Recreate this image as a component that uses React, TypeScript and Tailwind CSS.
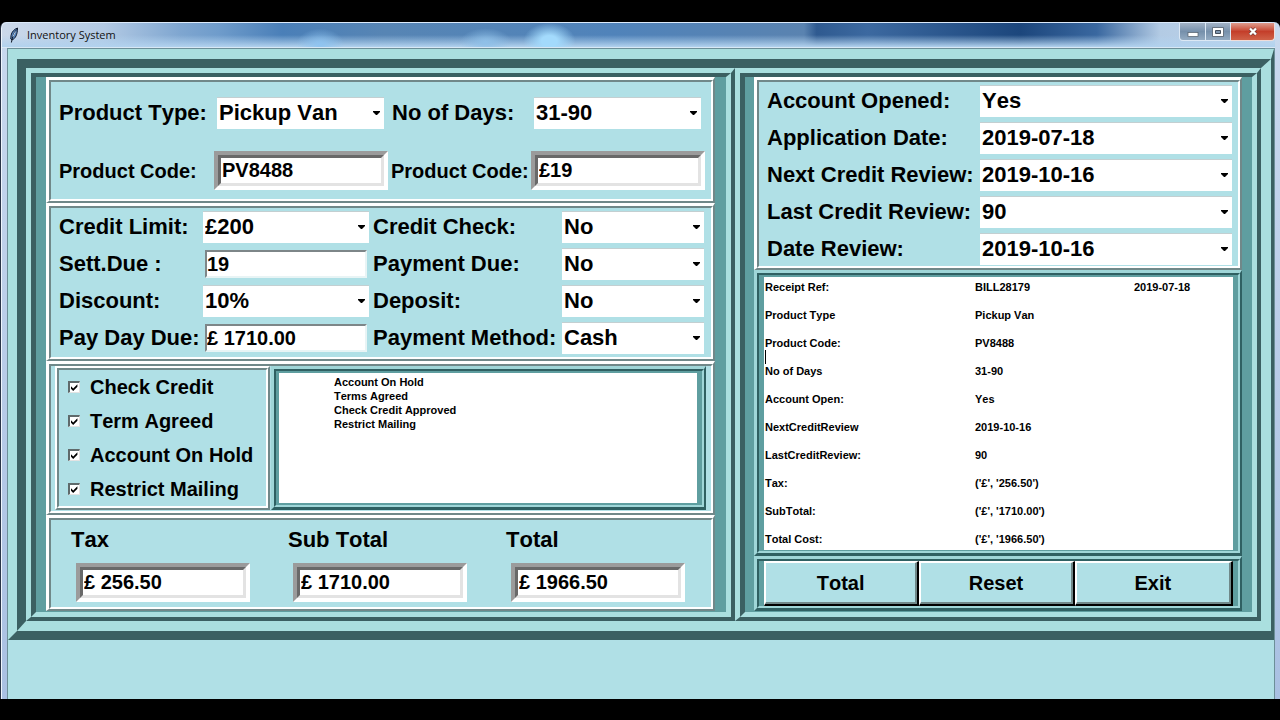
import { useState } from 'react'
import type { ReactNode } from 'react'
import { clsx } from 'clsx'

const RECEIPT_LINES = [
  // the date sits in a third column, pushed out with spaces
  'Receipt Ref:\tBILL28179' + ' '.repeat(34) + '2019-07-18',
  'Product Type\tPickup Van',
  'Product Code:\tPV8488',
  'No of Days\t31-90',
  'Account Open:\tYes',
  'NextCreditReview\t2019-10-16',
  'LastCreditReview:\t90',
  "Tax:\t('£', '256.50')",
  "SubTotal:\t('£', '1710.00')",
  "Total Cost:\t('£', '1966.50')",
]

const STATUS_LINES = ['Account On Hold', 'Terms Agreed', 'Check Credit Approved', 'Restrict Mailing']

const ACCOUNT_FIELDS = [
  { id: 'account-opened', label: 'Account Opened:', value: 'Yes' },
  { id: 'application-date', label: 'Application Date:', value: '2019-07-18' },
  { id: 'next-review', label: 'Next Credit Review:', value: '2019-10-16' },
  { id: 'last-review', label: 'Last Credit Review:', value: '90' },
  { id: 'date-review', label: 'Date Review:', value: '2019-10-16' },
]

const CHECKS = ['Check Credit', 'Term Agreed', 'Account On Hold', 'Restrict Mailing']

const TOTALS = [
  { id: 'tax', label: 'Tax', value: '£ 256.50' },
  { id: 'sub-total', label: 'Sub Total', value: '£ 1710.00' },
  { id: 'total', label: 'Total', value: '£ 1966.50' },
]

// Big cadet blue ridge around each half of the form
function Frame({ className, children }: { className?: string; children: ReactNode }) {
  return (
    <div className="flex min-w-0 flex-col border-t-[5px] border-r-4 border-b-4 border-l-[5px] border-t-[#aadfdf] border-r-[#3b6062] border-b-[#3b6062] border-l-[#aadfdf]">
      <div
        className={clsx(
          'flex flex-1 flex-col border-t-4 border-r-[5px] border-b-[5px] border-l-[5px] border-t-[#3b6062] border-r-[#aadfdf] border-b-[#aadfdf] border-l-[#3b6062] bg-[#5f9ea0] pb-px',
          className
        )}
      >
        {children}
      </div>
    </div>
  )
}

// White and grey ridge on powder blue
function Panel({ className, children }: { className?: string; children: ReactNode }) {
  return (
    <div className="border-t-3 border-r-2 border-b-2 border-l-3 border-t-white border-r-[#708889] border-b-[#708889] border-l-white">
      <div
        className={clsx(
          'border-2 border-t-[#708889] border-r-white border-b-white border-l-[#708889] bg-[#b0e0e6]',
          className
        )}
      >
        {children}
      </div>
    </div>
  )
}

// Thin cadet ridge, used round text boxes and the button bar
function CadetPanel({ className, children }: { className?: string; children: ReactNode }) {
  return (
    <div className="flex min-w-0 flex-1 flex-col border-t-3 border-r-2 border-b-3 border-l-3 border-t-[#9fd6d8] border-r-[#2f6062] border-b-[#2f6062] border-l-[#9fd6d8]">
      <div
        className={clsx(
          'flex-1 border-2 border-t-[#2f6062] border-r-[#9fd6d8] border-b-[#9fd6d8] border-l-[#2f6062] bg-[#5f9ea0]',
          className
        )}
      >
        {children}
      </div>
    </div>
  )
}

function Label({ htmlFor, small, className, children }: { htmlFor: string; small?: boolean; className?: string; children: ReactNode }) {
  return (
    <label
      htmlFor={htmlFor}
      className={clsx('leading-7 whitespace-nowrap', small ? 'text-[20px]' : 'text-[22px]', className)}
    >
      {children}
    </label>
  )
}

function Combo({ id, value, className }: { id: string; value: string; className?: string }) {
  return (
    <div className={clsx('relative h-8', className)}>
      <select
        id={id}
        defaultValue={value}
        className="block h-full w-full appearance-none border-t border-t-[#c3cfd1] bg-white pr-4 pb-0.5 pl-0.5 text-[22px] leading-7 outline-none"
      >
        <option>{value}</option>
      </select>
      <svg viewBox="0 0 7 4" className="pointer-events-none absolute top-3.5 right-1 h-1 w-[7px]">
        <path d="M0 0h7v1L4 4H3L0 1z" fill="#000" />
      </svg>
    </div>
  )
}

// Entry with the deep sunken border
function SunkenEntry({ id, value, className }: { id: string; value: string; className?: string }) {
  return (
    <div className={clsx('border-4 border-t-[#9b9b9b] border-r-white border-b-white border-l-[#9b9b9b]', className)}>
      <input
        id={id}
        type="text"
        defaultValue={value}
        className="block h-[31px] w-full border-3 border-t-[#696969] border-r-[#e3e3e3] border-b-[#e3e3e3] border-l-[#696969] bg-white pl-px text-[20px] outline-none"
      />
    </div>
  )
}

function FlatEntry({ id, value }: { id: string; value: string }) {
  return (
    <input
      id={id}
      type="text"
      defaultValue={value}
      className="mx-0.5 block h-7 min-w-0 border-2 border-t-[#7d8688] border-r-[#e8f4f5] border-b-[#e8f4f5] border-l-[#7d8688] bg-white text-[20px] outline-none"
    />
  )
}

function CheckRow({ label }: { label: string }) {
  const [checked, setChecked] = useState(true)

  return (
    <label className="flex h-[34px] items-center gap-2.5 text-[20px] whitespace-nowrap">
      <span className="relative h-3 w-3">
        <input
          type="checkbox"
          checked={checked}
          onChange={() => setChecked(!checked)}
          className="block h-3 w-3 appearance-none border-t-2 border-r border-b border-l-2 border-t-[#5f6a6b] border-r-[#e3e3e3] border-b-[#e3e3e3] border-l-[#5f6a6b] bg-white"
        />
        {checked && (
          <svg viewBox="0 0 12 12" className="pointer-events-none absolute inset-0 h-3 w-3">
            <path d="M3 5.2 5.2 7.6 9.4 3.2V5.8L5.2 10 3 7.8z" fill="#000" />
          </svg>
        )}
      </span>
      {label}
    </label>
  )
}

function TitleBar() {
  return (
    <header className="flex h-[26px] items-start justify-between rounded-t-md border-t border-b border-t-[#dceafa] border-b-[#d8e8f5] bg-[radial-gradient(ellipse_24px_16px_at_25%_90%,#8fc4f0_0%,transparent_100%),radial-gradient(ellipse_26px_18px_at_43%_75%,#a3dafc_30%,transparent_100%),radial-gradient(ellipse_26px_14px_at_38%_80%,#8fc0e8_0%,transparent_100%),linear-gradient(to_bottom,transparent_50%,#b2d2ee_100%),linear-gradient(to_right,#ccd9ea_0%,#b3cae4_8%,#7fa6d0_14%,#6f9ccb_17%,#4a7fb8_22%,#5785b4_30%,#5083ba_48%,#5a83b0_63%,#2f5a90_64%,#3c69a0_68%,#1c467c_80%,#3a68a0_86%,#b3cbe4_91%,#c3d8ee_100%)] pl-[5px]">
      <div className="flex h-6 items-center gap-1.5">
        <svg viewBox="0 0 14 16" className="h-4 w-3.5">
          <path d="M10.5 1C7.5 2 4.5 5 4 8.5L3.8 12 5 13C8.500 11.500 10.500 7.500 10.500 1z" fill="#5685bd" stroke="#111c30" />
          <path d="M9.600 2.500C7.500 5.500 5.500 9 4.400 15.500" fill="none" stroke="#0b1220" />
          <path d="M8.500 4.500 6 9.500" stroke="#d8e8f8" strokeWidth=".8" />
        </svg>
        <h1 className="font-['Open_Sans','Noto_Sans',sans-serif] text-[11px] font-normal text-[#111]">Inventory System</h1>
      </div>
      <div className="flex h-[18px]">
        <button
          type="button"
          aria-label="Minimize"
          className="flex w-[27px] items-center justify-center rounded-bl border-r border-b border-l border-[#dce8f4] bg-linear-to-b from-[#a3b3c6] via-[#7690ab] to-[#94abc2]"
        >
          <svg viewBox="0 0 12 10" className="h-2.5 w-3">
            <rect x="1" y="5.500" width="10" height="4" fill="#fff" stroke="#515c68" strokeWidth=".7" />
          </svg>
        </button>
        <button
          type="button"
          aria-label="Maximize"
          className="flex w-[25px] items-center justify-center border-r border-b border-[#dce8f4] bg-linear-to-b from-[#a3b3c6] via-[#7690ab] to-[#94abc2]"
        >
          <svg viewBox="0 0 12 10" className="h-2.5 w-3">
            <path d="M.5 .5h11v9H.5z" fill="#fff" stroke="#515c68" strokeWidth=".8" />
            <path d="M3.500 3.500h5v3h-5z" fill="#8298b0" stroke="#444f5c" />
          </svg>
        </button>
        <button
          type="button"
          aria-label="Close"
          className="flex w-11 items-center justify-center rounded-br border-r border-b border-[#f0dcd8] bg-linear-to-b from-[#dc9a8c] via-[#c43e2a] to-[#cf6148]"
        >
          <svg viewBox="0 0 10 9" className="h-[9px] w-2.5">
            <path d="M2 1.500 8 7.500M8 1.500 2 7.500" stroke="#6b3a38" strokeWidth="3.600" />
            <path d="M2 1.500 8 7.500M8 1.500 2 7.500" stroke="#fff" strokeWidth="2.300" />
          </svg>
        </button>
      </div>
    </header>
  )
}

function ProductPanel() {
  return (
    <Panel className="grid grid-cols-[155fr_174fr_143fr_174fr] items-center gap-y-[22px] pt-[15px] pr-1.5 pb-[9px] pl-2">
      <Label htmlFor="product-type">Product Type:</Label>
      <Combo id="product-type" value="Pickup Van" className="mr-1 ml-[3px]" />
      <Label htmlFor="days" className="pl-1">No of Days:</Label>
      <Combo id="days" value="31-90" className="mr-1 ml-[3px]" />
      <Label htmlFor="code" small>Product Code:</Label>
      <SunkenEntry id="code" value="PV8488" />
      <Label htmlFor="code-price" small className="pl-[3px]">Product Code:</Label>
      <SunkenEntry id="code-price" value="£19" />
    </Panel>
  )
}

function CreditPanel() {
  return (
    <Panel className="grid grid-cols-[144fr_166fr_193fr_142fr] items-center gap-y-[5px] pt-[3px] pr-[7px] pb-[3px] pl-2">
      <Label htmlFor="credit-limit">Credit Limit:</Label>
      <Combo id="credit-limit" value="£200" />
      <Label htmlFor="credit-check" className="pl-1">Credit Check:</Label>
      <Combo id="credit-check" value="No" />
      <Label htmlFor="sett-due">Sett.Due :</Label>
      <FlatEntry id="sett-due" value="19" />
      <Label htmlFor="payment-due" className="pl-1">Payment Due:</Label>
      <Combo id="payment-due" value="No" />
      <Label htmlFor="discount">Discount:</Label>
      <Combo id="discount" value="10%" />
      <Label htmlFor="deposit" className="pl-1">Deposit:</Label>
      <Combo id="deposit" value="No" />
      <Label htmlFor="pay-day">Pay Day Due:</Label>
      <FlatEntry id="pay-day" value="£ 1710.00" />
      <Label htmlFor="method" className="pl-1">Payment Method:</Label>
      <Combo id="method" value="Cash" />
    </Panel>
  )
}

function ChecksPanel() {
  return (
    <Panel className="flex gap-px pr-[5px] pb-px pl-1">
      <div className="w-[215px] shrink-0 border-2 border-t-white border-r-[#708889] border-b-[#708889] border-l-white">
        <div className="border-2 border-t-[#708889] border-r-white border-b-white border-l-[#708889] pl-[9px]">
          {CHECKS.map(label => (
            <CheckRow key={label} label={label} />
          ))}
        </div>
      </div>
      <CadetPanel className="flex py-0.5 pr-[5px] pl-[3px]">
        <textarea
          aria-label="Account status"
          defaultValue={STATUS_LINES.map(line => '\t' + line).join('\n')}
          className="block w-full resize-none bg-white pt-0.5 pl-0.5 text-[11px] leading-[14px] outline-none [tab-size:53px]"
        />
      </CadetPanel>
    </Panel>
  )
}

function TotalsPanel() {
  return (
    <Panel className="grid grid-cols-[217fr_218fr_205fr] pt-1.5 pb-[5px] pl-5">
      {TOTALS.map(total => (
        <div key={total.id} className="flex flex-col gap-[9px]">
          <Label htmlFor={total.id}>{total.label}</Label>
          <SunkenEntry id={total.id} value={total.value} className="ml-[5px] w-[174px]" />
        </div>
      ))}
    </Panel>
  )
}

function AccountPanel() {
  return (
    <Panel className="grid grid-cols-[213fr_252fr] items-center gap-y-[5px] pt-[3px] pr-1.5 pb-px pl-2">
      {ACCOUNT_FIELDS.map(field => (
        <div key={field.id} className="contents">
          <Label htmlFor={field.id}>{field.label}</Label>
          <Combo id={field.id} value={field.value} />
        </div>
      ))}
    </Panel>
  )
}

function Receipt() {
  return (
    <CadetPanel className="relative flex pt-0.5 pr-[5px] pb-px pl-[5px]">
      <textarea
        aria-label="Receipt"
        rows={19}
        defaultValue={RECEIPT_LINES.join('\n\n')}
        className="block w-full resize-none bg-white pt-[3px] pb-px pl-px text-[11px] leading-[14px] outline-none [tab-size:210px]"
      />
      {/* text cursor */}
      <span className="pointer-events-none absolute top-[75px] left-1.5 h-3.5 w-px bg-black" />
    </CadetPanel>
  )
}

function ActionButton({ children }: { children: ReactNode }) {
  return (
    <button
      type="button"
      className="border-t border-r-2 border-b-2 border-l border-t-white border-r-black border-b-black border-l-white"
    >
      <span className="flex h-[42px] items-center justify-center border-t border-r-2 border-b-2 border-l border-t-white border-r-[#708889] border-b-[#708889] border-l-white bg-[#b0e0e6] text-[20px]">
        {children}
      </span>
    </button>
  )
}

export default function App() {
  return (
    <div className="flex min-h-screen flex-col bg-black pt-[22px] pb-[21px] font-['Liberation_Sans',Arial,sans-serif] font-bold text-black [font-kerning:none]">
      <div className="flex flex-1 flex-col rounded-t-md border-l border-l-[#2a3448] bg-linear-to-b from-[#c9d9ee] to-[#a9c0e2] pr-[5px] pl-px shadow-[inset_1px_0_0_#eef5fc]">
        <div className="-mr-[5px] pr-[5px]">
          <TitleBar />
        </div>
        <main className="ml-[5px] flex flex-1 flex-col border-t border-r border-l border-[#6c8f98] bg-[#b0e0e6]">
          <div className="border-t-[10px] border-r-3 border-b-[9px] border-l-[9px] border-t-[#aadfdf] border-r-[#3b6062] border-b-[#3b6062] border-l-[#aadfdf]">
            <div className="grid grid-cols-[709fr_526fr] border-t-[9px] border-r-[10px] border-b-[10px] border-l-[9px] border-t-[#3b6062] border-r-[#aadfdf] border-b-[#aadfdf] border-l-[#3b6062]">
              <Frame className="pr-[11px] pl-2.5">
                <ProductPanel />
                <CreditPanel />
                <ChecksPanel />
                <TotalsPanel />
              </Frame>
              <Frame className="pr-2.5 pl-[9px]">
                <AccountPanel />
                <Receipt />
                <div className="flex">
                  <CadetPanel className="grid grid-cols-[155fr_155fr_158fr] pr-[5px] pl-[5px]">
                    <ActionButton>Total</ActionButton>
                    <ActionButton>Reset</ActionButton>
                    <ActionButton>Exit</ActionButton>
                  </CadetPanel>
                </div>
              </Frame>
            </div>
          </div>
        </main>
      </div>
    </div>
  )
}
